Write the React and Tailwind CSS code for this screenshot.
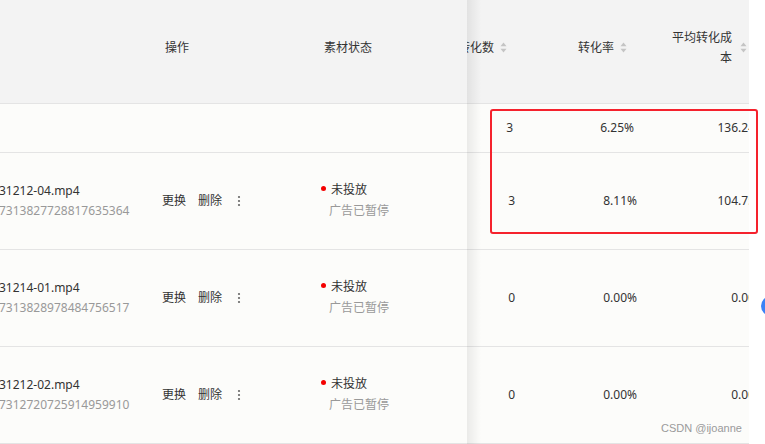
const rows = [
  { name: "31212-04.mp4", id: "7313827728817635364", a: "3", b: "8.11%", c: "104.75" },
  { name: "31214-01.mp4", id: "7313828978484756517", a: "0", b: "0.00%", c: "0.00" },
  { name: "31212-02.mp4", id: "7312720725914959910", a: "0", b: "0.00%", c: "0.00" },
];

const SortIcon = () => (
  <svg width="7" height="11" viewBox="0 0 7 11" className="shrink-0">
    <path d="M3.5 0.5 L6.5 4.3 L0.5 4.3 Z" fill="#c4c4c4" />
    <path d="M3.5 10.5 L6.5 6.7 L0.5 6.7 Z" fill="#c4c4c4" />
  </svg>
);

const MoreIcon = () => (
  <svg width="4" height="12" viewBox="0 0 4 12">
    <circle cx="2" cy="2" r="1.1" fill="#666" />
    <circle cx="2" cy="6" r="1.1" fill="#666" />
    <circle cx="2" cy="10" r="1.1" fill="#666" />
  </svg>
);

const App = () => {
  return (
    <div
      className="relative w-[765px] h-[444px] overflow-hidden bg-white text-[12px] text-[#333]"
      style={{ fontFamily: '"Noto Sans", "Noto Sans CJK SC", sans-serif' }}
    >
      <div className="flex w-[749px]">
        {/* fixed left columns */}
        <div className="relative z-10 w-[467px] shrink-0 bg-[#fcfcfa]">
          <div className="flex h-[104px] items-center pb-[8px] bg-[#f3f3f3] border-b border-[#e4e4e4]">
            <div className="w-[150px]" />
            <div className="w-[172px] pl-[15px]">操作</div>
            <div className="w-[145px] pl-[2px]">素材状态</div>
          </div>
          <div className="h-[49px] border-b border-[#e4e4e4]" />
          {rows.map((r) => (
            <div key={r.id} className="flex h-[97px] items-center border-b border-[#e4e4e4]">
              <div className="w-[150px] leading-[20px] whitespace-nowrap ml-[-1px]">
                <div className="text-[#333]">{r.name}</div>
                <div className="text-[#999]">{r.id}</div>
              </div>
              <div className="w-[172px] flex items-center pl-[13px]">
                <span>更换</span>
                <span className="ml-[12px]">删除</span>
                <span className="ml-[15px] flex items-center">
                  <MoreIcon />
                </span>
              </div>
              <div className="w-[145px] leading-[21px] -mt-[2px]">
                <div className="flex items-center">
                  <span className="w-[5px] h-[5px] rounded-full bg-[#f40000] mr-[5px] -mt-[3px]" />
                  <span>未投放</span>
                </div>
                <div className="pl-[8px] text-[#999]">广告已暂停</div>
              </div>
            </div>
          ))}
          <div className="absolute top-0 bottom-0 left-full w-[14px] bg-linear-to-r from-[rgba(0,0,0,0.07)] to-transparent pointer-events-none" />
        </div>

        {/* scrolled metric columns */}
        <div className="flex-1 overflow-hidden bg-[#fcfcfa]">
          <div className="ml-[-60px] w-[356px]">
            <div className="flex h-[104px] items-center pb-[8px] bg-[#f3f3f3] border-b border-[#e4e4e4]">
              <div className="w-[116px] flex items-center justify-end gap-[6px] pr-[16px]">
                <span>转化数</span>
                <SortIcon />
              </div>
              <div className="w-[120px] flex items-center justify-end gap-[6px] pr-[16px]">
                <span>转化率</span>
                <SortIcon />
              </div>
              <div className="w-[120px] flex items-center justify-end gap-[8px] pr-[16px]">
                <span className="w-[60px] text-right leading-[20px]">平均转化成本</span>
                <SortIcon />
              </div>
            </div>
            <div className="flex h-[49px] items-center border-b border-[#e4e4e4]">
              <div className="w-[116px] text-right pr-[10px]">3</div>
              <div className="w-[120px] text-right pr-[9px]">6.25%</div>
              <div className="w-[120px] text-right pr-[8px]">136.24</div>
            </div>
            {rows.map((r) => (
              <div key={r.id} className="flex h-[97px] items-center border-b border-[#e4e4e4]">
                <div className="w-[116px] text-right pr-[8px]">{r.a}</div>
                <div className="w-[120px] text-right pr-[6px]">{r.b}</div>
                <div className="w-[120px] text-right pr-[8px]">{r.c}</div>
              </div>
            ))}
          </div>
        </div>
      </div>

      {/* annotation box */}
      <div className="absolute left-[490px] top-[109px] w-[268px] h-[125px] border-2 border-[#f5222d] rounded-[3px]" />

      {/* floating blue button peeking in */}
      <div className="absolute left-[761px] top-[296px] w-[20px] h-[20px] rounded-full bg-[#3b82f6]" />

      <div
        className="absolute left-[661px] top-[420px] text-[11px] text-[#9a9a9a]"
        style={{ fontFamily: '"Liberation Sans", sans-serif' }}
      >
        CSDN @ijoanne
      </div>
    </div>
  );
};

export default App;
